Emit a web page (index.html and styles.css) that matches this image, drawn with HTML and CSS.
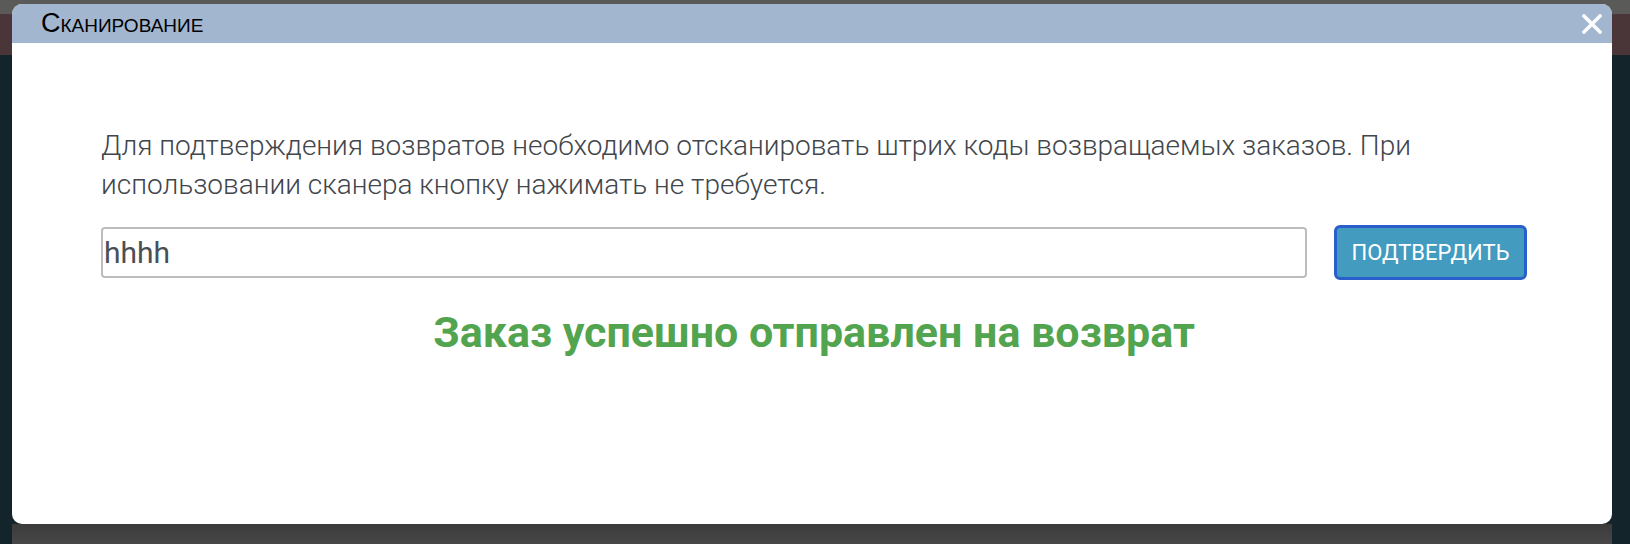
FILE: index.html
```html
<!DOCTYPE html>
<html lang="ru">
<head>
    <meta charset="UTF-8">
    <meta name="viewport" content="width=device-width, initial-scale=1.0">
    <title>Сканирование</title>

    <link rel="stylesheet" href="styles.css">
</head>
<body>

    <div class="modal">
        <div class="modal-header">
            <h2 class="modal-title">Сканирование</h2>
            <button class="close-btn" aria-label="Закрыть">
                <svg width="20" height="20" viewBox="0 0 20 20">
                    <path d="M2 2 L18 18 M18 2 L2 18" stroke="#fff" stroke-width="3.4" stroke-linecap="square"/>
                </svg>
            </button>
        </div>

        <div class="modal-body">
            <p class="hint">Для подтверждения возвратов необходимо отсканировать штрих коды возвращаемых заказов. При использовании сканера кнопку нажимать не требуется.</p>

            <div class="scan-row">
                <input type="text" class="scan-input" value="hhhh">
                <button class="confirm-btn">ПОДТВЕРДИТЬ</button>
            </div>

            <div class="result">Заказ успешно отправлен на возврат</div>
        </div>
    </div>

    <div class="page-bottom"></div>

</body>
</html>
```

FILE: styles.css
```css
* {
    margin: 0;
    padding: 0;
    box-sizing: border-box;
}

body {
    background: linear-gradient(to bottom, #5a5b58 0, #5a5b58 14px, #4a3639 14px, #4a3639 55px, #13252a 55px);
    padding: 4px 18px 0 12px;
    height: 544px;
    overflow: hidden;
    font-family: 'Roboto', sans-serif;
}

.modal {
    width: 1600px;
    height: 520px;
    background-color: #fff;
    border-radius: 10px;
    overflow: hidden;
    display: flex;
    flex-direction: column;
}

.modal-header {
    height: 39px;
    flex-shrink: 0;
    background-color: #a2b7cf;
    display: flex;
    justify-content: space-between;
    align-items: center;
    padding: 0 10px 0 29px;
}

.modal-title {
    font-family: 'Liberation Sans', Arial, sans-serif;
    font-weight: normal;
    font-size: 27px;
    font-variant: small-caps;
    color: #000;
}

.close-btn {
    background: none;
    border: none;
    width: 20px;
    height: 20px;
    cursor: pointer;
    display: flex;
}

.modal-body {
    padding: 83px 85px 0 89px;
}

.hint {
    font-weight: 300;
    font-size: 28px;
    line-height: 39px;
    color: #41464c;
}

.scan-row {
    display: flex;
    align-items: center;
    gap: 27px;
    margin-top: 21px;
}

.scan-input {
    flex: 1;
    height: 51px;
    border: 2px solid #bdbdbd;
    border-radius: 4px;
    padding: 0 1px;
    font-family: 'Roboto', sans-serif;
    font-size: 30px;
    color: #4a4f55;
    outline: none;
}

.confirm-btn {
    width: 193px;
    height: 55px;
    background-color: #439bc0;
    border: 3px solid #2a5fcb;
    border-radius: 6px;
    color: #fff;
    font-family: 'Roboto', sans-serif;
    font-size: 22px;
    cursor: pointer;
}

.result {
    text-align: center;
    margin-top: 27px;
    font-family: 'Roboto', sans-serif;
    font-weight: bold;
    font-size: 43px;
    color: #52a44f;
}

.page-bottom {
    height: 20px;
    width: 1600px;
    background: linear-gradient(to bottom, #3b3b3b, #474747);
}
```
